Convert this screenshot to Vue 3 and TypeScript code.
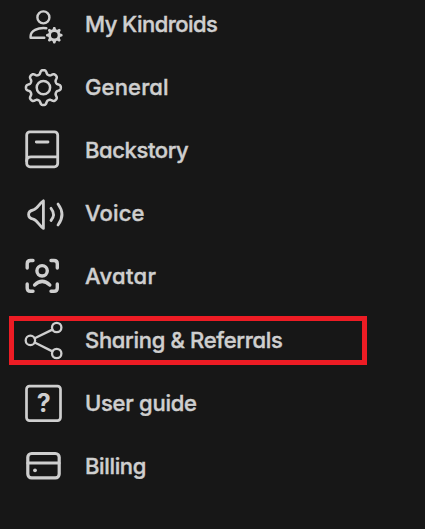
<template>
	<nav class="settings-menu">
		<ul class="menu-list">
			<li
				v-for="item in items"
				:key="item.icon"
				class="menu-item"
				:class="{ highlighted: item.highlighted }"
			>
				<svg class="menu-icon" viewBox="0 0 48 48" aria-hidden="true">
					<g v-if="item.icon === 'person'" stroke-width="2.4">
						<circle cx="23.4" cy="16.4" r="6" />
						<path d="M26.4 27.2C17.5 26.2 10.6 30 10.6 35.2V36.7H24.3" />
						<path class="solid" :d="smallGear" />
						<circle class="hole" cx="34.3" cy="34.2" r="3.3" />
					</g>
					<g v-else-if="item.icon === 'gear'" stroke-width="2.5">
						<path :d="largeGear" />
						<circle cx="23.4" cy="23.6" r="6.7" />
					</g>
					<g v-else-if="item.icon === 'book'" stroke-width="2.8">
						<rect x="6.7" y="4.8" width="31" height="35" rx="3.2" />
						<path d="M6.7 34C6.7 31 8.3 29.8 11 29.8H37.5M16.3 15H28" />
					</g>
					<g v-else-if="item.icon === 'voice'" stroke-width="2.8">
						<path
							d="M23.4 10.8V38.4C18.8 35.2 17.2 30.2 13.2 29.2C10 28.6 8.6 27.6 8.6 24.6C8.6 21.6 10 20.6 13.2 20C17.2 19 18.8 14 23.4 10.8Z"
						/>
						<path d="M31 18.3Q36 24.6 31 30.5M38 14Q46 24.6 38 35" />
					</g>
					<g v-else-if="item.icon === 'avatar'" stroke-width="3.4">
						<path
							d="M13 7.5H10.5Q7.2 7.5 7.2 10.8V15M31 7.5H34Q37.3 7.5 37.3 10.8V15M7.2 31V35Q7.2 38.3 10.5 38.3H13M31 38.3H34Q37.3 38.3 37.3 35V31"
						/>
						<circle cx="22.1" cy="17.8" r="5.2" />
						<path d="M14.6 32Q22.2 24.8 29.8 32" />
					</g>
					<g v-else-if="item.icon === 'share'" stroke-width="2.3">
						<circle cx="10.4" cy="23.4" r="4.7" />
						<circle cx="36.7" cy="10.5" r="4.7" />
						<circle cx="36.7" cy="36.5" r="4.7" />
						<path d="M14.7 21.3L32.4 12.6M14.7 25.5L32.4 34.4" />
					</g>
					<g v-else-if="item.icon === 'guide'" stroke-width="2.7">
						<rect x="6.5" y="6.2" width="34" height="34.4" rx="3" />
						<text x="23.8" y="31.7">?</text>
					</g>
					<g v-else stroke-width="3.2">
						<rect x="7.8" y="10.5" width="31.4" height="24.4" rx="3.8" />
						<path d="M8 20H39" />
						<circle class="solid" cx="15" cy="27.3" r="1.9" />
					</g>
				</svg>
				<span
					class="menu-label"
					:style="{ letterSpacing: item.tracking + 'px' }"
					>{{ item.label }}</span
				>
			</li>
		</ul>
	</nav>
</template>

<script setup lang="ts">
interface MenuItem {
	icon: string;
	label: string;
	tracking: number;
	highlighted?: boolean;
}

const items: MenuItem[] = [
	{ icon: 'person', label: 'My Kindroids', tracking: -0.55 },
	{ icon: 'gear', label: 'General', tracking: 0.15 },
	{ icon: 'book', label: 'Backstory', tracking: -0.4 },
	{ icon: 'voice', label: 'Voice', tracking: 0.15 },
	{ icon: 'avatar', label: 'Avatar', tracking: 0.35 },
	{ icon: 'share', label: 'Sharing & Referrals', tracking: -0.33, highlighted: true },
	{ icon: 'guide', label: 'User guide', tracking: -0.27 },
	{ icon: 'billing', label: 'Billing', tracking: -0.35 },
];

// Closed outline with eight rounded teeth
const gearPath = (cx: number, cy: number, radius: number, depth: number): string => {
	const points: string[] = [];
	for (let i = 0; i < 192; i++) {
		const angle = (i / 192) * Math.PI * 2;
		const r = radius + depth * Math.tanh(1.6 * Math.cos(angle * 8));
		const x = cx + r * Math.cos(angle);
		const y = cy + r * Math.sin(angle);
		points.push(`${x.toFixed(2)} ${y.toFixed(2)}`);
	}
	return `M${points.join('L')}Z`;
};

const largeGear = gearPath(23.4, 23.6, 15.5, 2.1);
const smallGear = gearPath(34.3, 34.2, 7.2, 1.2);
</script>

<style>
body {
	background: #171717;
}
</style>

<style scoped>
.settings-menu {
	height: 529px;
	overflow: hidden;
	background: #171717;
	color: #cfcfcf;
}

.menu-list {
	display: flex;
	flex-direction: column;
	gap: 1px;
	margin: -6px 0 0;
	padding: 0;
	list-style: none;
}

.menu-item {
	position: relative;
	display: flex;
	flex-shrink: 0;
	align-items: center;
	gap: 17px;
	height: 62px;
	padding-left: 20px;
}

.menu-item.highlighted {
	margin-top: 1px;
}

.menu-item.highlighted::after {
	content: '';
	position: absolute;
	top: 6px;
	left: 9px;
	box-sizing: border-box;
	width: 358px;
	height: 49px;
	border: 5px solid #ed1c24;
}

.menu-icon {
	flex: none;
	width: 48px;
	height: 48px;
	fill: none;
	stroke: currentColor;
	stroke-linecap: round;
	stroke-linejoin: round;
}

.menu-icon .solid {
	fill: currentColor;
	stroke: none;
}

.menu-icon .hole {
	fill: #171717;
	stroke: none;
}

.menu-icon text {
	fill: currentColor;
	stroke: none;
	font: 700 25px Inter, sans-serif;
	text-anchor: middle;
}

.menu-label {
	padding-bottom: 2px;
	font-family: Inter, 'Open Sans', sans-serif;
	font-size: 22px;
	font-weight: 500;
	font-feature-settings: 'cv11' 1;
	line-height: 30px;
	white-space: nowrap;
	-webkit-text-stroke: 0.4px currentColor;
}
</style>
